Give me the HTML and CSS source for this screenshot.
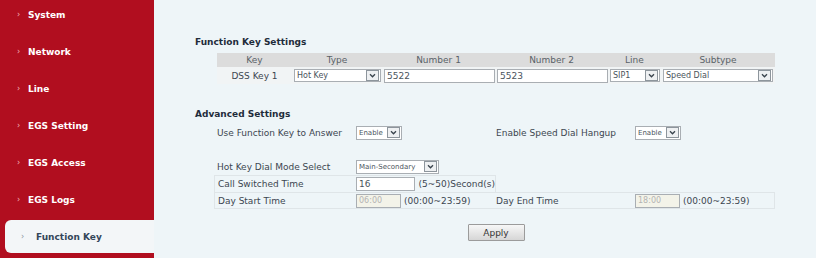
FILE: index.html
```html
<!DOCTYPE html>
<html>
<head>
    <meta charset="utf-8" />
    <title>Function Key</title>
    <link rel="stylesheet" href="styles.css">
</head>
<body>
    <div class="page">
        <ul class="menu">
            <li><span class="arr">›</span>System</li>
            <li><span class="arr">›</span>Network</li>
            <li><span class="arr">›</span>Line</li>
            <li><span class="arr">›</span>EGS Setting</li>
            <li><span class="arr">›</span>EGS Access</li>
            <li><span class="arr">›</span>EGS Logs</li>
            <li class="on"><div class="tab"><span class="arr">›</span>Function Key</div></li>
        </ul>

        <div class="main">
            <h3>Function Key Settings</h3>
            <div class="keys">
                <div class="head">Key</div>
                <div class="head">Type</div>
                <div class="head">Number 1</div>
                <div class="head">Number 2</div>
                <div class="head">Line</div>
                <div class="head">Subtype</div>

                <div class="cell key">DSS Key 1</div>
                <div class="cell"><div class="sel w86"><span>Hot Key</span><i class="dd"><svg viewBox="0 0 8 6"><path d="M1 1.5 4 4.5 7 1.5" /></svg></i></div></div>
                <div class="cell"><div class="inp w111">5522</div></div>
                <div class="cell"><div class="inp w111">5523</div></div>
                <div class="cell"><div class="sel w50"><span>SIP1</span><i class="dd"><svg viewBox="0 0 8 6"><path d="M1 1.5 4 4.5 7 1.5" /></svg></i></div></div>
                <div class="cell"><div class="sel w110"><span>Speed Dial</span><i class="dd"><svg viewBox="0 0 8 6"><path d="M1 1.5 4 4.5 7 1.5" /></svg></i></div></div>
            </div>

            <h3 class="adv">Advanced Settings</h3>
            <div class="opts">
                <div class="lbl">Use Function Key to Answer</div>
                <div><div class="sel w46 sm"><span>Enable</span><i class="dd"><svg viewBox="0 0 8 6"><path d="M1 1.5 4 4.5 7 1.5" /></svg></i></div></div>
                <div class="lbl2">Enable Speed Dial Hangup</div>
                <div><div class="sel w46 sm"><span>Enable</span><i class="dd"><svg viewBox="0 0 8 6"><path d="M1 1.5 4 4.5 7 1.5" /></svg></i></div></div>

                <div class="gap"></div>

                <div class="lbl">Hot Key Dial Mode Select</div>
                <div class="span3"><div class="sel w83 sm"><span>Main-Secondary</span><i class="dd"><svg viewBox="0 0 8 6"><path d="M1 1.5 4 4.5 7 1.5" /></svg></i></div></div>

                <div class="box half">
                    <div class="lbl">Call Switched Time</div>
                    <div class="val"><div class="inp w70">16</div><span>(5~50)Second(s)</span></div>
                </div>

                <div class="box full">
                    <div class="lbl">Day Start Time</div>
                    <div class="val"><div class="inp w45 off">06:00</div><span>(00:00~23:59)</span></div>
                    <div class="lbl2">Day End Time</div>
                    <div class="val"><div class="inp w45 off">18:00</div><span>(00:00~23:59)</span></div>
                </div>
            </div>

            <div class="btns"><button class="apply">Apply</button></div>
        </div>
    </div>
</body>
</html>
```

FILE: styles.css
```css
body,
div,
ul,
li,
h3
{
    margin: 0;
    padding: 0;
}

ul
{
    list-style-type: none;
}

body
{
    background: #fff;
    font: 9px/12px "DejaVu Sans", Verdana, sans-serif;
    color: #3c4650;
}

.page
{
    display: flex;
    height: 258px;
}

/* left menu */
.menu
{
    width: 154px;
    background: #b10e1f;
    overflow: hidden;
}

    .menu li
    {
        display: flex;
        align-items: center;
        height: 37px;
        padding-left: 17px;
        color: #fff;
        font-weight: bold;
    }

        .menu li:first-child
        {
            margin-top: -4px;
        }

        .menu .arr
        {
            width: 11px;
            color: #f2b8bd;
            font-weight: normal;
            font-size: 8px;
        }

        .menu li.on
        {
            padding-left: 5px;
        }

            .menu li.on .tab
            {
                display: flex;
                align-items: center;
                flex: 1;
                height: 33px;
                padding-left: 16px;
                background: #f3f6f8;
                border-radius: 6px 0 0 6px;
                color: #34465a;
            }

            .menu li.on .arr
            {
                width: 15px;
                color: #8a949c;
            }

/* main area */
.main
{
    width: 662px;
    background: #eef5f8;
    padding: 36px 0 0 41px;
    box-sizing: border-box;
}

    .main h3
    {
        font-size: 9px;
        line-height: 12px;
        font-weight: bold;
        color: #1f2c3b;
    }

        .main h3.adv
        {
            margin-top: 24px;
        }

.keys
{
    display: grid;
    grid-template-columns: 75px 90px 113px 113px 53px 114px;
    grid-template-rows: 14px 17px;
    width: 558px;
    margin: 5px 0 0 22px;
    background: #f1f4f5;
}

    .keys .head
    {
        background: #dcdcdc;
        text-align: center;
        line-height: 15px;
        color: #5a6268;
    }

    .keys .cell
    {
        display: flex;
        align-items: center;
        padding-left: 2px;
    }

        .keys .cell.key
        {
            justify-content: center;
            padding-left: 0;
            color: #3c4650;
        }

/* fake select / input boxes */
.sel,
.inp
{
    display: flex;
    align-items: center;
    height: 13px;
    box-sizing: border-box;
    background: #fff;
    border: 1px solid #a9aeb3;
    font-size: 8px;
    color: #4a545c;
}

    .sel span
    {
        flex: 1;
        padding-left: 2px;
        white-space: nowrap;
        overflow: hidden;
    }

    .sel.sm
    {
        font-size: 7px;
        height: 14px;
    }

    .sel .dd
    {
        display: flex;
        align-items: center;
        justify-content: center;
        width: 11px;
        height: 9px;
        margin-right: 1px;
        border: 1px solid #8d959c;
        background: #eef0f2;
    }

        .sel .dd svg
        {
            width: 7px;
            height: 5px;
            fill: none;
            stroke: #39434c;
            stroke-width: 1.6;
        }

.inp
{
    padding-left: 2px;
    font-size: 9px;
    height: 14px;
}

    .inp.off
    {
        background: #f3f3e9;
        color: #b3b3b3;
        font-size: 8px;
    }

.w86 { width: 87px; }
.w111 { width: 111px; }
.w50 { width: 50px; }
.w110 { width: 110px; }
.w46 { width: 46px; }
.w83 { width: 83px; }
.w70 { width: 70px; }
.w45 { width: 45px; }

/* advanced settings grid */
.opts
{
    display: grid;
    grid-template-columns: 142px 140px 139px 140px;
    grid-auto-rows: 17px;
    width: 561px;
    margin: 4px 0 0 19px;
    align-items: center;
}

    .opts .lbl
    {
        padding-left: 3px;
    }

    .opts .gap
    {
        grid-column: 1 / -1;
        height: 16px;
    }

    .opts .span3
    {
        grid-column: 2 / -1;
    }

    .opts .box
    {
        display: grid;
        grid-template-columns: subgrid;
        align-items: center;
        height: 17px;
        box-sizing: border-box;
        border: 1px solid #dfe5e8;
    }

        .opts .box.half
        {
            grid-column: 1 / 3;
            border-bottom: none;
        }

        .opts .box.full
        {
            grid-column: 1 / -1;
        }

    .opts .val
    {
        display: flex;
        align-items: center;
        gap: 3px;
    }

.btns
{
    display: flex;
    justify-content: center;
    width: 558px;
    margin: 15px 0 0 22px;
}

.apply
{
    width: 57px;
    height: 17px;
    border: 1px solid #9b9b9b;
    border-radius: 1px;
    background: linear-gradient(#f7f7f7, #d6d6d6);
    font: 9px "DejaVu Sans", Verdana, sans-serif;
    color: #333;
    padding: 0;
}
```
